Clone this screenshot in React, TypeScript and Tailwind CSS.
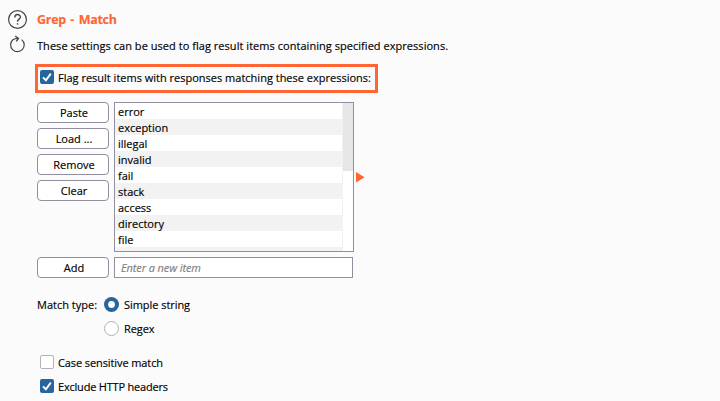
import type { ReactNode } from "react";

const items = ["error", "exception", "illegal", "invalid", "fail", "stack", "access", "directory", "file", ""];

function Button({ children }: { children: ReactNode }) {
  return (
    <button className="flex h-[21px] w-[72px] shrink-0 items-center justify-center rounded-[4px] border border-[#918fa0] bg-white pt-px pl-0.5 text-black">
      {children}
    </button>
  );
}

function Checkbox({ checked = false }: { checked?: boolean }) {
  return checked ? (
    <span className="h-3.5 w-3.5 shrink-0 rounded-[2px] bg-[#27659e]">
      <svg viewBox="0 0 14 14" className="block h-3.5 w-3.5" fill="none" stroke="#fff" strokeWidth="1.9">
        <path d="M3 7.3 L5.9 10.2 L10.8 3.6" />
      </svg>
    </span>
  ) : (
    <span className="h-3.5 w-3.5 shrink-0 rounded-[2px] border border-[#b2b2b2] bg-white" />
  );
}

function Radio({ checked = false }: { checked?: boolean }) {
  return checked ? (
    <svg className="shrink-0" width="15" height="15" viewBox="0 0 15 15">
      <circle cx="7.5" cy="7.5" r="7.5" fill="#27659e" />
      <circle cx="7.5" cy="7.5" r="3.4" fill="#fff" />
    </svg>
  ) : (
    <span className="h-[15px] w-[15px] shrink-0 rounded-full border border-[#b2b2b2] bg-white" />
  );
}

export default function App() {
  return (
    <main className="flex h-[401px] w-[720px] overflow-hidden bg-[#fbfbfb] pl-2 font-['Open_Sans','Noto_Sans',sans-serif] text-[11px] leading-4 whitespace-nowrap text-black [-webkit-text-stroke:0.15px]">
      <aside className="w-[29px] shrink-0 pt-2.5">
        <svg width="19" height="44" viewBox="0 0 19 44" fill="none" stroke="#454545" strokeWidth="1.2">
          <circle cx="9.5" cy="9.5" r="8.9" />
          <path d="M6.8 7.4 C6.8 3.5 12.4 3.7 12.4 7.1 C12.4 9.3 9.5 9.1 9.5 11.8" strokeWidth="1.4" />
          <rect x="8.8" y="13.2" width="1.4" height="1.4" fill="#454545" stroke="none" />
          <path d="M13.7 29.6 A6.8 6.8 0 1 1 4.9 29.8 Q6.6 28.3 9.8 28.3" />
          <path d="M7.2 26 L10.4 28.3 L8.3 31.4" strokeWidth="1.4" />
        </svg>
      </aside>
      <section className="flex flex-col">
        <h1 className="mt-[11px] h-4 text-[12.5px] leading-[17px] font-bold tracking-[-0.3px] [word-spacing:1.6px] text-[#ff6633]">Grep - Match</h1>
        <p className="mt-[11px] h-4 tracking-[0.04px]">These settings can be used to flag result items containing specified expressions.</p>
        <label className="mt-[10px] -ml-0.5 flex h-[29px] w-[343px] items-center gap-1 border-[3px] border-[#ff6633] pb-[3px] pl-0.5">
          <Checkbox checked />
          <span className="pt-0.5">Flag result items with responses matching these expressions:</span>
        </label>
        <div className="mt-[9px] flex h-[150px]">
          <div className="flex flex-col gap-[5px]">
            <Button>Paste</Button>
            <Button>Load ...</Button>
            <Button>Remove</Button>
            <Button>Clear</Button>
          </div>
          <div className="ml-[5px] flex w-60 overflow-hidden border border-[#918fa0] bg-white">
            <ul className="flex-1 border-r border-[#f2f2f2]">
              {items.map((item, i) => (
                <li key={i} className="h-4 pl-[3px] leading-[18px] even:bg-[#f2f2f2]">{item}</li>
              ))}
            </ul>
            <div className="w-2.5 shrink-0">
              <div className="h-[68px] bg-[#e6e6e6]" />
            </div>
          </div>
          <svg className="mt-[70px] ml-0.5" width="9" height="11" viewBox="0 0 9 11" fill="#ff6633">
            <path d="M0 0 L8.7 5.2 L0 10.4 Z" />
          </svg>
        </div>
        <div className="mt-[5px] flex gap-[5px]">
          <Button>Add</Button>
          <input
            placeholder="Enter a new item"
            className="h-[21px] w-[239px] border border-[#918fa0] bg-white pl-1.5 italic tracking-[-0.1px] placeholder:text-[#808080]"
          />
        </div>
        <div className="mt-[19px] flex">
          <span className="w-[67px] leading-[15px]">Match type:</span>
          <div className="flex flex-col gap-[9px]">
            <label className="flex h-[15px] items-center gap-[5px]"><Radio checked /><span className="pt-px tracking-[-0.05px]">Simple string</span></label>
            <label className="flex h-[15px] items-center gap-[5px]"><Radio /><span className="pt-px tracking-[-0.1px]">Regex</span></label>
          </div>
        </div>
        <div className="mt-[19px] ml-[3px] flex flex-col gap-2.5">
          <label className="flex h-3.5 items-center gap-1"><Checkbox /><span className="pt-0.5 tracking-[-0.1px]">Case sensitive match</span></label>
          <label className="flex h-3.5 items-center gap-1"><Checkbox checked /><span className="pt-0.5 tracking-[-0.2px]">Exclude HTTP headers</span></label>
        </div>
      </section>
    </main>
  );
}
